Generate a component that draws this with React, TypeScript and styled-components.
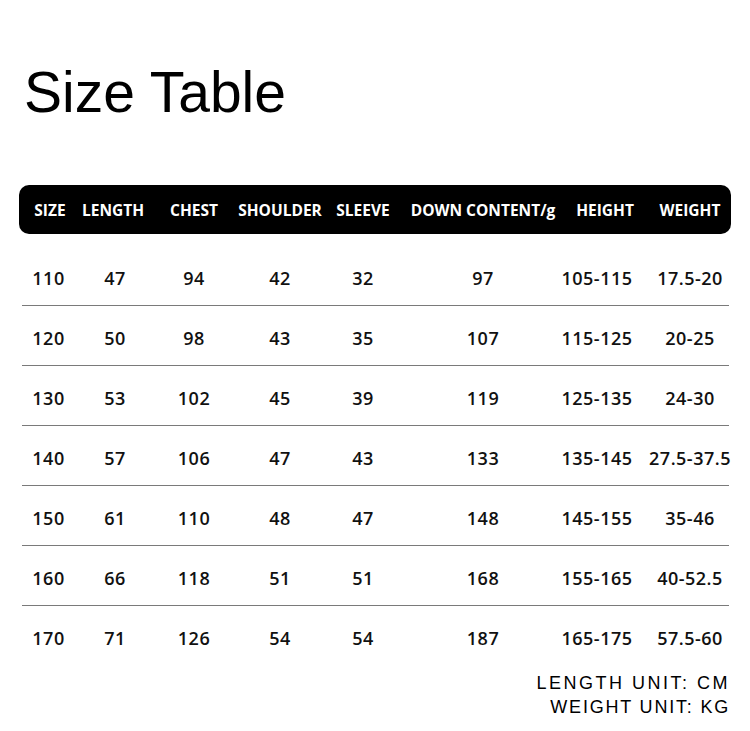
import React from "react";
import styled, { createGlobalStyle } from "styled-components";

const GlobalStyle = createGlobalStyle`
  body {
    margin: 0;
    background: #fff;
  }
`;

type Column = { label: string; width: number; pad?: number };

const columns: Column[] = [
  { label: "SIZE", width: 62, pad: 6 },
  { label: "LENGTH", width: 64, pad: -4 },
  { label: "CHEST", width: 98 },
  { label: "SHOULDER", width: 74 },
  { label: "SLEEVE", width: 92 },
  { label: "DOWN CONTENT/g", width: 148 },
  { label: "HEIGHT", width: 96, pad: 16 },
  { label: "WEIGHT", width: 74 },
];

const rows = [
  ["110", "47", "94", "42", "32", "97", "105-115", "17.5-20"],
  ["120", "50", "98", "43", "35", "107", "115-125", "20-25"],
  ["130", "53", "102", "45", "39", "119", "125-135", "24-30"],
  ["140", "57", "106", "47", "43", "133", "135-145", "27.5-37.5"],
  ["150", "61", "110", "48", "47", "148", "145-155", "35-46"],
  ["160", "66", "118", "51", "51", "168", "155-165", "40-52.5"],
  ["170", "71", "126", "54", "54", "187", "165-175", "57.5-60"],
];

// the divider lines start 3px in from the header bar, so the body grid's first column is 3px narrower
const headCols = columns.map((c) => `${c.width}px`).join(" ") + " 1fr";
const bodyCols =
  columns.map((c, i) => `${i === 0 ? c.width - 3 : c.width}px`).join(" ") + " 1fr";

function App() {
  return (
    <Page>
      <GlobalStyle />
      <Title>Size Table</Title>
      <Table>
        <HeaderBar>
          {columns.map((c) => (
            <HeadCell key={c.label}>{c.label}</HeadCell>
          ))}
        </HeaderBar>
        <Body>
          {rows.map((r, i) => (
            <Row key={r[0]} $last={i === rows.length - 1}>
              {r.map((v, j) => (
                <Cell key={j} $pad={columns[j].pad ?? 0}>
                  {v}
                </Cell>
              ))}
            </Row>
          ))}
        </Body>
      </Table>
      <Units>
        <UnitLine $spacing={2.5}>LENGTH UNIT: CM</UnitLine>
        <UnitLine $spacing={1.8}>WEIGHT UNIT: KG</UnitLine>
      </Units>
    </Page>
  );
}

const Page = styled.div`
  width: 750px;
  height: 731px;
  overflow: hidden;
  background: #fff;
  color: #111;
`;

const Title = styled.h1`
  margin: 0;
  padding: 65px 0 0 24px;
  font-family: "Liberation Sans", Arial, sans-serif;
  font-weight: 400;
  font-size: 57px;
  line-height: 55px;
  color: #000;
`;

const Table = styled.div`
  margin: 65px 19px 0;
`;

const HeaderBar = styled.div`
  display: grid;
  grid-template-columns: ${headCols};
  justify-items: center;
  align-items: center;
  height: 49px;
  background: #000;
  border-radius: 10px;
`;

const HeadCell = styled.div`
  white-space: nowrap;
  font-family: "Open Sans", sans-serif;
  font-weight: 700;
  font-size: 15.5px;
  color: #fff;
`;

const Body = styled.div`
  margin-top: 12px;
  padding: 0 2px 0 3px;
`;

const Row = styled.div<{ $last: boolean }>`
  display: grid;
  grid-template-columns: ${bodyCols};
  justify-items: center;
  align-items: center;
  height: 60px;
  box-sizing: border-box;
  padding-top: 4px;
  border-bottom: 1px solid ${(p) => (p.$last ? "transparent" : "#7a7a7a")};
`;

const Cell = styled.div<{ $pad: number }>`
  white-space: nowrap;
  padding-right: ${(p) => Math.max(p.$pad, 0)}px;
  padding-left: ${(p) => Math.max(-p.$pad, 0)}px;
  font-family: "Open Sans", sans-serif;
  font-weight: 600;
  font-size: 18px;
  letter-spacing: 0.5px;
  color: #111;
`;

const Units = styled.div`
  margin-top: 5px;
  padding-right: 20px;
  display: flex;
  flex-direction: column;
  align-items: flex-end;
`;

const UnitLine = styled.div<{ $spacing: number }>`
  font-family: "Liberation Sans", Arial, sans-serif;
  font-size: 18px;
  line-height: 24px;
  letter-spacing: ${(p) => p.$spacing}px;
  color: #000;
`;

export default App;
